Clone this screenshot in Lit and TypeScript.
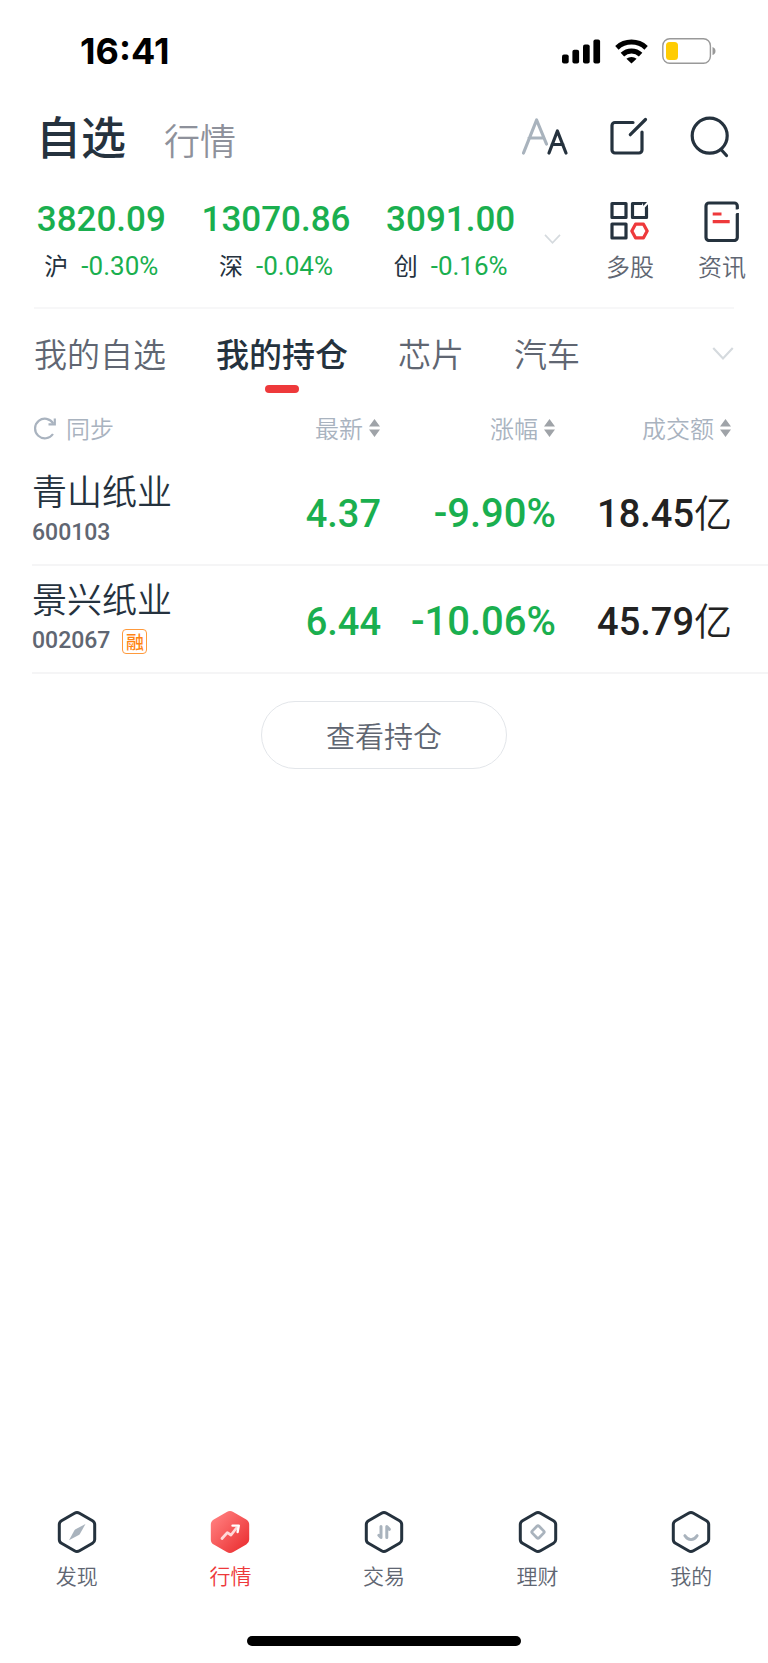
import { LitElement, html, svg, css } from "lit";
import { customElement, state } from "lit/decorators.js";
import { classMap } from "lit/directives/class-map.js";

const hexagon =
  "M17.5 3.2Q20 1.8 22.5 3.2L35.5 10.7Q37.7 12 37.7 14.5V29.5Q37.7 32 35.5 33.3L22.5 40.8Q20 42.2 17.5 40.8L4.5 33.3Q2.3 32 2.3 29.5V14.5Q2.3 12 4.5 10.7Z";

const indexes = [
  { name: "沪", value: "3820.09", change: "-0.30%" },
  { name: "深", value: "13070.86", change: "-0.04%" },
  { name: "创", value: "3091.00", change: "-0.16%" },
];

const groups = ["我的自选", "我的持仓", "芯片", "汽车"];

const columns = ["最新", "涨幅", "成交额"];

const stocks = [
  { name: "青山纸业", code: "600103", margin: false, price: "4.37", change: "-9.90%", amount: "18.45亿" },
  { name: "景兴纸业", code: "002067", margin: true, price: "6.44", change: "-10.06%", amount: "45.79亿" },
];

const navItems = [
  { label: "发现", glyph: svg`<path d="M12 30.3L17.3 20.5Q17.8 19.7 18.5 19.2L28.5 14L23.2 23.5Q22.6 24.5 21.8 25Z" fill="#a9b3bd"/>` },
  {
    label: "行情",
    glyph: svg`<path d="M12 28.5L17.3 22.6L21 25L26.5 18" fill="none" stroke="#ffd9d9" stroke-width="2.8" stroke-linecap="round" stroke-linejoin="round"/><path d="M22.5 15.6H28.8L27.6 22" fill="none" stroke="#fff" stroke-width="2.4" stroke-linecap="round" stroke-linejoin="round"/>`,
  },
  {
    label: "交易",
    glyph: svg`<path d="M17 16.5V27.5L14.8 25.3M22.8 27.5V16.5L25.4 19.3" fill="none" stroke="#a9b3bd" stroke-width="3" stroke-linecap="round" stroke-linejoin="round"/>`,
  },
  { label: "理财", glyph: svg`<rect x="15.2" y="17.2" width="9.6" height="9.6" rx="1.6" transform="rotate(45 20 22)" fill="none" stroke="#a9b3bd" stroke-width="2.8"/>` },
  { label: "我的", glyph: svg`<path d="M13.8 25.6Q16.5 29.6 20 29.6T26.2 25.6" fill="none" stroke="#a9b3bd" stroke-width="2.8" stroke-linecap="round"/>` },
];

@customElement("app-root")
export class AppRoot extends LitElement {
  @state() private group = 1;
  @state() private nav = 1;

  static styles = css`
    :host {
      --ink: #25323e;
      --body: #606672;
      --muted: #a9b3bf;
      --green: #1aaf4f;
      --red: #ee393b;
      display: flex;
      flex-direction: column;
      min-height: 100vh;
      background: #fff;
      color: var(--ink);
      font-family: "Noto Sans CJK SC", sans-serif;
    }
    * {
      box-sizing: border-box;
    }
    svg {
      display: block;
      flex: none;
    }
    button {
      margin: 0;
      padding: 0;
      border: 0;
      background: none;
      color: inherit;
      font: inherit;
      cursor: pointer;
    }
    a {
      color: inherit;
      text-decoration: none;
    }
    h1 {
      margin: 0;
      font-size: 45px;
      line-height: 62px;
      font-weight: 500;
    }
    .status {
      display: flex;
      align-items: center;
      justify-content: space-between;
      height: 102px;
      padding: 0 52px 0 80px;
      color: #000;
      font: 700 36px/40px Inter, sans-serif;
    }
    .status-icons {
      display: flex;
      align-items: center;
      gap: 14px;
    }
    .top {
      display: flex;
      align-items: center;
      height: 67px;
      padding: 0 37px 0 36px;
    }
    .market-link {
      margin: 6px auto 0 38px;
      color: #8e919b;
      font-size: 36px;
      line-height: 52px;
      font-weight: 350;
    }
    .tools {
      display: flex;
      align-items: center;
      gap: 40px;
    }
    .indexes {
      display: flex;
      height: 139px;
      padding-left: 14px;
    }
    .index-list {
      display: grid;
      grid-template-columns: repeat(3, 1fr);
      flex: 1;
      padding-top: 28px;
    }
    .index {
      display: flex;
      flex-direction: column;
      align-items: center;
      gap: 8px;
      color: var(--green);
      font-family: Roboto, sans-serif;
    }
    .index-value {
      font-size: 35px;
      line-height: 46px;
      font-weight: 500;
    }
    .index-change {
      display: flex;
      align-items: center;
      gap: 13px;
      font-size: 26px;
      line-height: 30px;
    }
    .index-name {
      color: var(--ink);
      font-family: "Noto Sans CJK SC", sans-serif;
      font-size: 24px;
      line-height: 26px;
      padding-bottom: 2px;
    }
    .expand {
      display: flex;
      justify-content: center;
      width: 28px;
      height: 139px;
      align-items: center;
    }
    .shortcuts {
      display: grid;
      grid-template-columns: 92px 92px;
      margin-left: 18px;
      padding-top: 31px;
    }
    .shortcut {
      display: flex;
      flex-direction: column;
      align-items: center;
      gap: 6px;
      color: var(--body);
      font-size: 24px;
      line-height: 36px;
      font-weight: 350;
    }
    .rule {
      height: 2px;
      margin: -1px 34px 0;
      border: 0;
      background: #f7f7f8;
    }
    .groups {
      display: flex;
      align-items: center;
      height: 88px;
      padding: 0 34px;
    }
    .group-list {
      display: flex;
      flex: 1;
      gap: 50px;
    }
    .group {
      position: relative;
      color: var(--body);
      font-size: 33px;
      line-height: 88px;
      font-weight: 350;
    }
    .group.on {
      color: var(--ink);
      font-weight: 500;
    }
    .group.on::after {
      content: "";
      position: absolute;
      bottom: 4px;
      left: 50%;
      width: 34px;
      height: 8px;
      margin-left: -17px;
      border-radius: 4px;
      background: var(--red);
    }
    .holdings {
      display: block;
      padding-left: 32px;
    }
    table {
      width: 100%;
      border-collapse: collapse;
      table-layout: fixed;
    }
    .col-num {
      width: 175px;
    }
    .col-last {
      width: 212px;
    }
    th {
      height: 60px;
      padding: 0 0 2px;
      color: var(--muted);
      font-size: 24px;
      line-height: 36px;
      font-weight: 350;
      text-align: right;
    }
    th:first-child {
      padding-left: 1px;
      text-align: left;
    }
    th:not(:first-child) .head-btn {
      gap: 6px;
      padding-right: 1px;
    }
    th:last-child,
    td:last-child {
      padding-right: 36px;
    }
    .head-btn {
      display: inline-flex;
      align-items: center;
      gap: 9px;
      vertical-align: middle;
    }
    td {
      height: 108px;
      padding: 6px 0 0;
      border-bottom: 2px solid #f5f5f6;
      color: var(--green);
      font: 500 38px/48px Roboto, "Noto Sans CJK SC", sans-serif;
      text-align: right;
      white-space: nowrap;
    }
    td:first-child {
      padding: 0 0 4px;
      color: var(--ink);
      font-family: "Noto Sans CJK SC", sans-serif;
      font-weight: 350;
      text-align: left;
    }
    td:last-child {
      color: #222;
    }
    .change {
      font-size: 40px;
    }
    .unit {
      font-weight: 350;
    }
    .name {
      font-size: 35px;
      line-height: 48px;
    }
    .code {
      display: flex;
      align-items: center;
      gap: 12px;
      height: 38px;
      color: var(--body);
      font: 500 23px/38px Roboto, sans-serif;
    }
    .badge {
      width: 25px;
      height: 25px;
      border: 1px solid #ff9a3c;
      border-radius: 4px;
      color: #ff8412;
      font: 500 18px/23px "Noto Sans CJK SC", sans-serif;
      text-align: center;
    }
    .view {
      align-self: center;
      width: 246px;
      height: 68px;
      margin-top: 27px;
      border: 1px solid #e3e6ea;
      border-radius: 34px;
      color: var(--body);
      font-size: 29px;
      line-height: 44px;
      font-weight: 350;
    }
    .nav {
      display: grid;
      grid-template-columns: repeat(5, 1fr);
      margin-top: auto;
      padding-bottom: 45px;
    }
    .nav-item {
      display: flex;
      flex-direction: column;
      align-items: center;
      gap: 5px;
      color: var(--body);
      font-size: 21px;
      line-height: 32px;
      font-weight: 350;
    }
    .nav-item.on {
      color: var(--red);
    }
    .home {
      align-self: center;
      width: 274px;
      height: 10px;
      margin-bottom: 17px;
      border-radius: 5px;
      background: #000;
    }
  `;

  private statusBar() {
    return html`<div class="status">
      <span>16:41</span>
      <div class="status-icons">
        <svg width="39" height="25" viewBox="0 0 39 25">
          <rect x="0" y="15.5" width="6.7" height="9" rx="2" />
          <rect x="10.4" y="10.8" width="6.7" height="13.7" rx="2" />
          <rect x="21" y="5.6" width="6.7" height="18.9" rx="2" />
          <rect x="31.4" y="0.5" width="6.7" height="24" rx="2" />
        </svg>
        <svg width="33" height="25" viewBox="0 0 33 25">
          <path d="M1.9 8.8A21.5 21.5 0 0 1 31.1 8.8" fill="none" stroke="#000" stroke-width="5" />
          <path d="M7.4 15.6A13 13 0 0 1 25.6 15.6" fill="none" stroke="#000" stroke-width="5" />
          <path d="M16.5 24.5L11.4 19.8A8 8 0 0 1 21.6 19.8Z" />
        </svg>
        <svg width="54" height="26" viewBox="0 0 54 26">
          <rect x="0.8" y="0.8" width="47.6" height="24.4" rx="7" fill="none" stroke="#999" stroke-width="1.4" />
          <rect x="4" y="4" width="12" height="18" rx="3.5" fill="#ffcc02" />
          <path d="M50.5 9Q53.5 10 53.5 13T50.5 17Z" fill="#999" />
        </svg>
      </div>
    </div>`;
  }

  private chevron(width: number, height: number) {
    return html`<svg width=${width} height=${height} viewBox="0 0 20 12" fill="none" stroke="#d5dade" stroke-width="2">
      <path d="M1 1L10 10.5L19 1" />
    </svg>`;
  }

  render() {
    return html`
      ${this.statusBar()}
      <header class="top">
        <h1>自选</h1>
        <a class="market-link" href="#market">行情</a>
        <div class="tools">
          <button aria-label="字号">
            <svg width="48" height="40" viewBox="0 0 48 40" fill="none" stroke-width="3.2" stroke-linecap="round" stroke-linejoin="round">
              <path d="M2.5 37L15.6 4L25.5 28M8 22H22" stroke="#a9b3bd" />
              <path d="M28 37L36.4 15L45 37M31 28.5H42" stroke="#25323e" />
            </svg>
          </button>
          <button aria-label="编辑">
            <svg width="40" height="40" viewBox="0 0 40 40" fill="none" stroke="#25323e" stroke-width="3.2" stroke-linecap="round">
              <path d="M24 6.5H6A3 3 0 0 0 3 9.5V34A3 3 0 0 0 6 37H30A3 3 0 0 0 33 34V16M21.3 18.7L36.5 3.5" />
            </svg>
          </button>
          <button aria-label="搜索">
            <svg width="42" height="44" viewBox="0 0 42 44" fill="none" stroke="#25323e" stroke-width="3.2" stroke-linecap="round">
              <circle cx="20.7" cy="21.7" r="17.5" />
              <path d="M32.5 36L37.5 41.5" />
            </svg>
          </button>
        </div>
      </header>

      <section class="indexes">
        <div class="index-list">
          ${indexes.map(
            (i) => html`<div class="index">
              <div class="index-value">${i.value}</div>
              <div class="index-change"><span class="index-name">${i.name}</span>${i.change}</div>
            </div>`
          )}
        </div>
        <button class="expand" aria-label="展开指数">${this.chevron(17, 10)}</button>
        <div class="shortcuts">
          <a class="shortcut" href="#multi">
            <svg width="42" height="42" viewBox="0 0 42 42" fill="none" stroke="#25323e" stroke-width="3.2" stroke-linejoin="round">
              <rect x="3" y="3.5" width="14" height="14" />
              <path d="M33 3.5H23.5V17.5H37.5V8" />
              <path d="M32.5 2H38L39 3V8.5H36Z" fill="#25323e" stroke="none" />
              <path d="M33.5 8.5L40 1.5" stroke="#fff" stroke-width="2.2" />
              <rect x="3" y="24" width="14" height="14" />
              <path d="M22.8 31L26.5 24.2H34.5L38.2 31L34.5 37.8H26.5Z" stroke="#ee393b" />
            </svg>
            多股
          </a>
          <a class="shortcut" href="#news">
            <svg width="40" height="42" viewBox="0 0 40 42" fill="none" stroke="#25323e" stroke-width="3.2">
              <path d="M35.3 9.5V6A3 3 0 0 0 32.3 3H7A3 3 0 0 0 4 6V37.5A3 3 0 0 0 7 40.5H32.3A3 3 0 0 0 35.3 37.5V13" />
              <path d="M32.5 13.5L39 8.5" stroke="#fff" stroke-width="2" />
              <path d="M10.7 14H19.5M10.7 21.7H27.7" stroke="#ee393b" />
            </svg>
            资讯
          </a>
        </div>
      </section>
      <hr class="rule" />

      <nav class="groups">
        <div class="group-list">
          ${groups.map(
            (g, n) => html`<button class=${classMap({ group: true, on: n === this.group })} @click=${() => (this.group = n)}>${g}</button>`
          )}
        </div>
        <button aria-label="更多分组">${this.chevron(22, 13)}</button>
      </nav>

      <div class="holdings">
        <table>
          <colgroup>
            <col />
            <col class="col-num" />
            <col class="col-num" />
            <col class="col-last" />
          </colgroup>
          <thead>
            <tr>
              <th>
                <button class="head-btn">
                  <svg width="24" height="24" viewBox="0 0 24 24" fill="none" stroke="#a9b3bf" stroke-width="2.2">
                    <path d="M20.3 7.5A9.8 9.8 0 1 0 20 18" />
                    <path d="M21.8 2.5V8.3H15.5" />
                  </svg>
                  同步
                </button>
              </th>
              ${columns.map(
                (c) => html`<th>
                  <button class="head-btn">
                    ${c}
                    <svg width="11" height="18" viewBox="0 0 11 18" fill="#9fa3a8"><path d="M5.5 0L11 7.6H0ZM5.5 18L11 10.4H0Z" /></svg>
                  </button>
                </th>`
              )}
            </tr>
          </thead>
          <tbody>
            ${stocks.map(
              (s) => html`<tr>
                <td>
                  <div class="name">${s.name}</div>
                  <div class="code">${s.code}${s.margin ? html`<span class="badge">融</span>` : ""}</div>
                </td>
                <td>${s.price}</td>
                <td class="change">${s.change}</td>
                <td>${s.amount.slice(0, -1)}<span class="unit">${s.amount.slice(-1)}</span></td>
              </tr>`
            )}
          </tbody>
        </table>
      </div>
      <button class="view">查看持仓</button>

      <nav class="nav">
        ${navItems.map((item, n) => {
          const on = n === this.nav;
          return html`<button class=${classMap({ "nav-item": true, on })} @click=${() => (this.nav = n)}>
            <svg width="40" height="44" viewBox="0 0 40 44">
              <defs>
                <linearGradient id="glow" x1="0" y1="0" x2="1" y2="1">
                  <stop offset="0.1" stop-color="#ff7b7b" />
                  <stop offset="0.9" stop-color="#ec3436" />
                </linearGradient>
              </defs>
              <path d=${hexagon} fill=${on ? "url(#glow)" : "none"} stroke=${on ? "url(#glow)" : "#25323e"} stroke-width="3" />
              ${item.glyph}
            </svg>
            ${item.label}
          </button>`;
        })}
      </nav>
      <div class="home"></div>
    `;
  }
}
